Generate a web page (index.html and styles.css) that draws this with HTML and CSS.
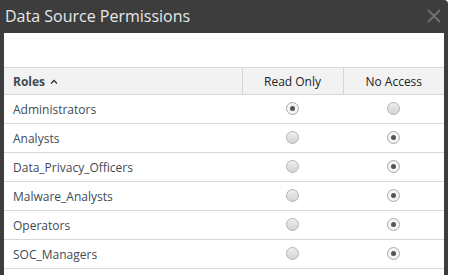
FILE: index.html
```html
<!DOCTYPE html>
<html>
<head>
    <title>Data Source Permissions</title>
    <link rel="stylesheet" href="styles.css">
</head>
<body>
    <div class="dialog">
        <div class="dialog-title">
            <span>Data Source Permissions</span>
            <svg class="close" width="14" height="14" viewBox="0 0 14 14">
                <path d="M1 1 L13 13 M13 1 L1 13" stroke="#6b7076" stroke-width="2" fill="none"/>
            </svg>
        </div>
        <div class="dialog-body">
            <table class="perm-table">
                <colgroup>
                    <col class="col-role">
                    <col class="col-perm">
                    <col class="col-perm">
                </colgroup>
                <thead>
                    <tr>
                        <th class="role-col">Roles
                            <svg class="caret" width="8" height="5" viewBox="0 0 8 5">
                                <path d="M1 4.5 L4 1.5 L7 4.5" stroke="#333" stroke-width="1.3" fill="none"/>
                            </svg>
                        </th>
                        <th>Read Only</th>
                        <th>No Access</th>
                    </tr>
                </thead>
                <tbody>
                    <tr>
                        <td class="role-col">Administrators</td>
                        <td><span class="radio checked"></span></td>
                        <td><span class="radio"></span></td>
                    </tr>
                    <tr>
                        <td class="role-col">Analysts</td>
                        <td><span class="radio"></span></td>
                        <td><span class="radio checked"></span></td>
                    </tr>
                    <tr>
                        <td class="role-col">Data_Privacy_Officers</td>
                        <td><span class="radio"></span></td>
                        <td><span class="radio checked"></span></td>
                    </tr>
                    <tr>
                        <td class="role-col">Malware_Analysts</td>
                        <td><span class="radio"></span></td>
                        <td><span class="radio checked"></span></td>
                    </tr>
                    <tr>
                        <td class="role-col">Operators</td>
                        <td><span class="radio"></span></td>
                        <td><span class="radio checked"></span></td>
                    </tr>
                    <tr>
                        <td class="role-col">SOC_Managers</td>
                        <td><span class="radio"></span></td>
                        <td><span class="radio checked"></span></td>
                    </tr>
                </tbody>
            </table>
        </div>
    </div>
</body>
</html>
```

FILE: styles.css
```css
body {
    margin: 0;
    background: #ffffff;
    font-family: "Open Sans", Arial, sans-serif;
    overflow: hidden;
}
.dialog {
    width: 440px;
    height: 275px;
    background: #3d3d3d;
    padding: 0 4px;
    border-top-right-radius: 4px;
}
.dialog-title {
    height: 33px;
    display: flex;
    align-items: center;
    justify-content: space-between;
    color: #e8e8e8;
    font-size: 16px;
    padding-left: 1px;
}
.dialog-title span {
    margin-top: -1px;
}
.close {
    margin-right: 3px;
    margin-top: -1px;
}
.dialog-body {
    background: #ffffff;
    height: 208px;
    padding-top: 34px;
}
.perm-table {
    width: 440px;
    table-layout: fixed;
    border-collapse: collapse;
    font-size: 12px;
}
.col-role {
    width: 238px;
}
.col-perm {
    width: 101px;
}
.perm-table th {
    background: #f2f2f2;
    color: #222222;
    font-weight: normal;
    height: 26px;
    padding: 0;
    border-top: 1px solid #d6d6d6;
    border-bottom: 1px solid #d6d6d6;
    border-left: 1px solid #d6d6d6;
    text-align: center;
}
.perm-table th.role-col {
    font-weight: bold;
    border-left: none;
    text-align: left;
}
.caret {
    margin-left: 2px;
    vertical-align: 2px;
}
.perm-table td {
    height: 28px;
    border-bottom: 1px solid #d6d6d6;
    text-align: center;
    padding: 0;
}
.perm-table .role-col {
    padding-left: 9px;
    text-align: left;
    color: #3f4a55;
}
.radio {
    display: inline-block;
    width: 11px;
    height: 11px;
    border: 1px solid #b4b4b4;
    border-radius: 50%;
    background: linear-gradient(#eeeeee, #d4d4d4);
    vertical-align: middle;
    position: relative;
    margin-top: -3px;
}
.radio.checked {
    background: #f4f4f4;
    border-color: #a9a9a9;
}
.radio.checked::after {
    content: "";
    position: absolute;
    left: 3px;
    top: 3px;
    width: 5px;
    height: 5px;
    border-radius: 50%;
    background: #555555;
}
```
